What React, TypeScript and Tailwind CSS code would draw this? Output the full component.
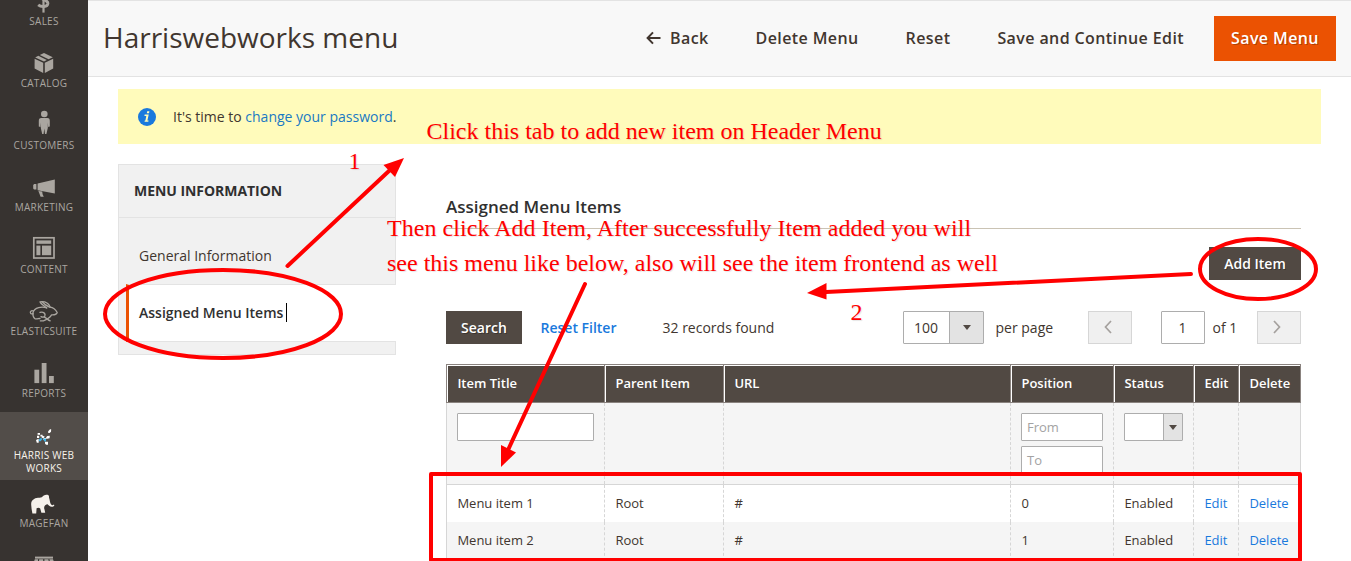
import React from "react";

const icons: Record<string, React.ReactNode> = {
  sales: (
    <g fill="none" stroke="currentColor" strokeWidth="2.9">
      <path d="M15.8 4.6C15 3.4 8 2.4 7.4 5.8C7.200 9.600 16 9 15.900 13.400C15.600 17.400 9 17.200 6.200 14.800" />
      <path d="M11.500 0V22.600" strokeWidth="2.2" />
    </g>
  ),
  catalog: (
    <g fill="currentColor">
      <path d="M2.6 6.8L11.2 10.8V21L2.6 16.6Z" />
      <path d="M12.8 10.8L21.2 6.8V16.6L12.8 21Z" />
      <path d="M3.2 5.4L6.3 3.8L14.8 8.1L12 9.6Z" />
      <path d="M7.8 3L12 1L20.8 5.3L16.6 7.3Z" />
    </g>
  ),
  customers: (
    <g fill="currentColor">
      <circle cx="12.3" cy="0" r="3.3" />
      <path d="M9.3 4H15.3C17.2 4 17.8 5.3 17.8 7V12.4L16.2 13L15.8 8.5V14L14.4 20H13L12.3 14.5L11.6 20H10.2L8.8 14V8.5L8.4 13L6.8 12.4V7C6.8 5.3 7.4 4 9.3 4Z" />
    </g>
  ),
  marketing: (
    <g fill="currentColor">
      <path d="M2 8H4.4V13.6H2L1.2 12.4V9.2Z" />
      <path d="M5.6 7.4L22.8 3.4V17.4L5.6 14.2Z" />
      <path d="M6.4 15L10.2 15.6L10.6 18.2L11.8 20.8H8.6Z" />
    </g>
  ),
  content: (
    <g fill="currentColor">
      <rect x="1.8" y="-.2" width="20.2" height="20.2" fill="none" stroke="currentColor" strokeWidth="1.7" />
      <rect x="4.4" y="2.4" width="14.8" height="3.4" />
      <rect x="4.4" y="7.6" width="4" height="9.6" />
      <rect x="10" y="7.6" width="9.2" height="9.6" />
    </g>
  ),
  rabbit: (
    <g fill="none" stroke="currentColor" strokeWidth="1.3" strokeLinecap="round" strokeLinejoin="round">
      <path d="M14.6 7.8C12.5 6.200 9.400 4.200 8 1.800C13 1.2 16.5 3 18 6.8" />
      <path d="M10.4 2C12.600 4.600 14.800 6 17.600 7.200" />
      <path d="M18 7.2C21 7.6 23.6 9.6 25.2 12.6C24.2 14.6 22.2 15.2 19.6 14.9C18 17.5 15.5 19.4 11.4 20.9H8.4" />
      <path d="M14.8 8C10 6 2.4 7.2 1 12.6C.7 15.3 1.2 17.2 2.6 18.4C4.2 19.7 6.2 18.4 8 18.5" />
      <path d="M1.3 11C-.6 10-2.4 11.8-1.4 13.2C-1 14.2.3 14 1 13.6" />
      <path d="M8 12.4C11.2 11.2 14 13.6 12.8 16.2C11.9 17.6 10 17.3 9 16.6M12.4 17.2C15 18.5 16 20.2 18.2 20.9" />
    </g>
  ),
  reports: (
    <g fill="currentColor">
      <rect x="2.4" y="7.7" width="4.8" height="13.4" />
      <rect x="9.7" y="1" width="4.8" height="20.1" />
      <rect x="17" y="14" width="4.8" height="7.1" />
    </g>
  ),
  harris: (
    <g fill="#fff">
      <path d="M16 7.4L18 5.2L19.2 5.200L19 7.400L17.8 9L16 8.8Z" />
      <path d="M5.6 9H8V10.800H5.600Z" />
      <path d="M14 13.6L15.2 12L17.8 11.8L17.6 14.2L15 14.8Z" />
      <path d="M5 11.800H7.200V14H5ZM8.400 10.800H10.5V12.400H8.400ZM4 16L6.700 14.8V18.700H4.800ZM10.4 11.5L12.8 12.800L11.2 14.5L9.4 13.2ZM12 14H15L13 16.5L11 15.8ZM13 17.800H16V20.8H14L13 19.5Z" />
      <path d="M7 15.2L9.4 13.8L10.2 15.2L8.6 17.2H7Z" fill="#42b4e6" />
      <path d="M11.4 14.4H13.8L14.2 17.2L12.8 17.8L11.2 15.6Z" fill="#42b4e6" />
    </g>
  ),
  elephant: (
    <path
      fill="#f5f1eb"
      d="M-.8 13C-1.2 8.6 2 6.2 6 5.8C8.4 5.6 9.5 5.6 10.6 4.5C12 2.6 14.4 3 15.2 2.8C16.6 2.6 17.2 4 17 5.5C18 8 17.8 11 19.2 12.6C20.2 13.6 21.2 13 21.8 12.4L22.4 13.2C21.4 15.4 18.6 15.2 17.2 13.8C16.2 12.8 15.5 12.1 14.6 12.4C12.4 13 11.6 15.2 12.5 17.5L13.2 20.8H9.4L8.2 16.4C7.3 15.4 5.5 15.5 4.6 16.2L4.2 21.6H.4L-.4 17Z"
    />
  ),
  store: (
    <g fill="currentColor">
      <path d="M3 2.6H21V4.6H3Z" />
      <path d="M2.8 5.2H6.2L5.6 9H1.6ZM7.2 5.2H11.2V9H6.8ZM12.4 5.2H16.4L17 9H12.4ZM17.4 5.2H21L22.4 9H18.2Z" />
    </g>
  ),
};

const nav = [
  { icon: "sales", label: "Sales" },
  { icon: "catalog", label: "Catalog" },
  { icon: "customers", label: "Customers" },
  { icon: "marketing", label: "Marketing" },
  { icon: "content", label: "Content" },
  { icon: "rabbit", label: "Elasticsuite" },
  { icon: "reports", label: "Reports" },
  { icon: "harris", label: "Harris Web Works", active: true },
  { icon: "elephant", label: "Magefan" },
  { icon: "store", label: "" },
];

function Sidebar() {
  return (
    <nav className="-mt-[22px] flex w-[88px] shrink-0 flex-col bg-[#373330]">
      {nav.map((n) => (
        <a
          key={n.icon}
          className={`flex shrink-0 flex-col items-center px-2.5 pt-3 text-center ${
            n.active ? "h-[68px] bg-[#524d49] text-[#f7f3eb]" : "h-[62px] text-[#aaa6a0]"
          }`}
        >
          <svg viewBox="0 0 24 24" className="size-6 shrink-0 overflow-visible">
            {icons[n.icon]}
          </svg>
          <span className="mt-px text-[10px] leading-[13px] tracking-[0.25px] uppercase">{n.label}</span>
        </a>
      ))}
    </nav>
  );
}

function Header() {
  return (
    <header className="flex h-[77px] items-center border-y border-[#e3e3e3] bg-[#f8f8f8] pr-[15px] pl-[15px] text-[#41362f]">
      <h1 className="pb-1 text-[28px] leading-none">Harriswebworks menu</h1>
      <div className="ml-auto flex items-center text-[16px] leading-[22px] font-semibold tracking-[0.4px]">
        <a className="flex items-center gap-[9px] pb-0.5">
          <svg viewBox="0 0 15 14" className="h-[14px] w-[15px]" fill="none" stroke="currentColor" strokeWidth="2">
            <path d="M14.5 7H1.8M7 1.4L1.6 7L7 12.6" />
          </svg>
          Back
        </a>
        <a className="ml-[47px] pb-0.5">Delete Menu</a>
        <a className="ml-[47px] pb-0.5">Reset</a>
        <a className="ml-[47px] pb-0.5">Save and Continue Edit</a>
        <a className="ml-[30px] flex h-[45px] w-[122px] items-center justify-center bg-[#eb5202] pb-0.5 text-white [text-shadow:1px_1px_0_rgba(0,0,0,0.25)]">
          Save Menu
        </a>
      </div>
    </header>
  );
}

function Tabs() {
  return (
    <div className="h-[191px] w-[278px] shrink-0 border border-[#e3e3e3] bg-[#f1f1f1]">
      <div className="flex h-[53px] items-center border-b border-[#e3e3e3] pb-0.5 pl-[15px] text-[14px] font-bold tracking-[-0.05px] text-[#303030]">
        MENU INFORMATION
      </div>
      <div className="flex h-[66px] items-center pt-2 pl-5 text-[14px]">General Information</div>
      <div className="-mr-px ml-[7px] flex h-[58px] items-center border-y border-l-[3px] border-y-[#e3e3e3] border-l-[#eb5202] bg-white pb-0.5 pl-2.5 text-[14px] font-semibold text-[#303030]">
        Assigned Menu Items
        <span className="ml-[3px] h-[19px] w-px bg-black" />
      </div>
    </div>
  );
}

const Caret = () => <span className="border-x-4 border-t-[5px] border-x-transparent border-t-[#514943]" />;

function Pager({ d }: { d: string }) {
  return (
    <span className="flex h-[33px] w-11 items-center justify-center border border-[#d6d6d6] bg-[#f0f0f0] pr-1 pb-0.5 text-[#a5a19e]">
      <svg viewBox="0 0 8 14" className="h-[14px] w-2" fill="none" stroke="currentColor" strokeWidth="1.7">
        <path d={d} />
      </svg>
    </span>
  );
}

function Toolbar() {
  return (
    <div className="mt-[31px] flex h-[33px] items-center text-[14px]">
      <button className="h-[33px] w-[76px] bg-[#514943] font-semibold text-white [text-shadow:1px_1px_0_rgba(0,0,0,0.3)]">
        Search
      </button>
      <a className="ml-[18.5px] w-[76px] font-semibold whitespace-nowrap text-[#1979dd]">Reset Filter</a>
      <span className="ml-[46px]">32 records found</span>
      <div className="ml-auto flex items-center">
        <span className="flex h-[33px] w-[81px] rounded-[1px] border border-[#adadad] bg-white">
          <span className="flex-1 pl-2.5 leading-[32px]">100</span>
          <span className="flex w-[34px] items-center justify-center border-l border-[#adadad] bg-[#e3e3e3]">
            <Caret />
          </span>
        </span>
        <span className="ml-[11.5px] w-[58.5px] whitespace-nowrap">per page</span>
        <span className="ml-[34px] flex">
          <Pager d="M7 1L1.5 7L7 13" />
        </span>
        <span className="ml-[29px] h-[33px] w-11 rounded-[1px] border border-[#adadad] pr-px text-center leading-[32px]">1</span>
        <span className="ml-[7.5px] w-[25.5px] whitespace-nowrap">of 1</span>
        <span className="ml-[19px] flex">
          <Pager d="M1 1L6.5 7L1 13" />
        </span>
      </div>
    </div>
  );
}

const cols = "grid grid-cols-[158px_119px_287px_103px_80px_45px_62px] border-l";
const heads = ["Item Title", "Parent Item", "URL", "Position", "Status", "Edit", "Delete"];
const rows = [
  ["Menu item 1", "Root", "#", "0", "Enabled", "Edit", "Delete"],
  ["Menu item 2", "Root", "#", "1", "Enabled", "Edit", "Delete"],
];
const cell = "border-r border-dashed border-[#d6d6d6] last:border-solid";
const input = "block h-7 rounded-[1px] border border-[#adadad] bg-white";

function Grid() {
  return (
    <div className="mt-5 text-[13px]">
      <div className={`${cols} h-[39px] border-y border-[#8a837f]`}>
        {heads.map((h) => (
          <div key={h} className="flex border-r border-[#8a837f]">
            <div className="flex-1 border-t border-l border-white bg-[#514943] pl-[9.4px] leading-[35px] font-semibold text-white">
              {h}
            </div>
          </div>
        ))}
      </div>
      <div className={`${cols} h-[82px] border-b border-[#d6d6d6] bg-[#f5f5f5]`}>
        <div className={`${cell} pt-2.5 pl-2.5`}>
          <span className={`${input} w-[137px]`} />
        </div>
        <div className={cell} />
        <div className={cell} />
        <div className={`${cell} flex flex-col gap-[5px] pt-2.5 pl-2.5 text-[#a3a3a3]`}>
          <span className={`${input} w-[82px] pl-[5px] leading-[27px]`}>From</span>
          <span className={`${input} w-[82px] pl-[5px] leading-[27px]`}>To</span>
        </div>
        <div className={`${cell} pt-2.5 pl-2.5`}>
          <span className="flex h-7 w-[59px] rounded-[1px] border border-[#adadad] bg-white">
            <span className="ml-auto flex w-[19px] items-center justify-center border-l border-[#adadad] bg-[#e3e3e3]">
              <Caret />
            </span>
          </span>
        </div>
        <div className={cell} />
        <div className={cell} />
      </div>
      {rows.map((r, i) => (
        <div
          key={r[0]}
          className={`${cols} border-[#d6d6d6] leading-[37px] ${i ? "h-[39px] bg-[#f5f5f5]" : "h-[37px] bg-white"}`}
        >
          {r.map((t, j) => (
            <div key={j} className={`${cell} pl-[10.4px] ${j > 4 ? "text-[#1979dd]" : ""}`}>
              {t}
            </div>
          ))}
        </div>
      ))}
    </div>
  );
}

const note =
  "absolute font-['Liberation_Serif',serif] text-[24px] leading-[35px] whitespace-nowrap text-[#ff0000] [text-shadow:1px_1px_1px_rgba(0,0,0,0.1)]";

function Annotations() {
  return (
    <div className="pointer-events-none absolute inset-0">
      <svg
        viewBox="0 0 1351 561"
        className="absolute inset-0 h-[561px] w-[1351px]"
        fill="none"
        stroke="#ff0000"
        strokeWidth="4"
      >
        <ellipse cx="223" cy="314" rx="118" ry="44" />
        <ellipse cx="1258" cy="269" rx="58" ry="30" />
        <rect x="431" y="474" width="869" height="86" strokeLinejoin="round" />
        <path d="M287.5 266L390 170M585 284L508.5 449M1191 274L826 292" strokeLinecap="round" />
        <g fill="#ff0000" stroke="none">
          <path d="M404 158L383.5 165L395 177Z" />
          <path d="M501 467L501 445L516 452.5Z" />
          <path d="M807 293L826.5 283V299.5Z" />
        </g>
      </svg>
      <span className={`${note} top-[114px] left-[426.500px]`}>Click this tab to add new item on Header Menu</span>
      <span className={`${note} top-[144px] left-[348.500px]`}>1</span>
      <span className={`${note} top-[211px] left-[387px]`}>
        <span className="tracking-[0.05px]">Then click Add Item, After successfully Item added you will</span>
        <br />
        see this menu like below, also will see the item frontend as well
      </span>
      <span className={`${note} top-[295px] left-[850.500px]`}>2</span>
    </div>
  );
}

export default function App() {
  return (
    <div className="relative flex h-[561px] w-[1351px] overflow-hidden bg-white font-['Open_Sans',sans-serif] text-[#41362f]">
      <Sidebar />
      <div className="flex min-w-0 flex-1 flex-col">
        <Header />
        <main className="flex flex-col pt-3 pl-[30px]">
          <div className="flex h-[55px] w-[1203px] items-center bg-[#fffbbb] pl-[19.5px] text-[14px]">
            <svg viewBox="0 0 18 18" className="mr-[17.5px] size-[18px]">
              <circle cx="9" cy="9" r="9" fill="#1979dd" />
              <path
                d="M9.2 3.2H11.4L11 5.2H8.8ZM6.7 6.6H10.7L9.4 12.4H10.6L10.3 13.8H6.5L6.8 12.6H7.4L8.3 8H6.4Z"
                fill="#fffbbb"
              />
            </svg>
            <span>
              It's time to <a className="text-[#1979c3]">change your password</a>.
            </span>
          </div>
          <div className="flex pt-5">
            <Tabs />
            <section className="ml-[50px] w-[855px] pt-[32px]">
              <h2 className="h-[33px] border-b border-[#cac3b4] text-[17px] leading-[21px] font-semibold text-[#303030]">
                Assigned Menu Items
              </h2>
              <div className="mt-[18px] flex justify-end">
                <button className="h-[33px] w-[92px] bg-[#514943] text-[14px] font-semibold text-white [text-shadow:1px_1px_0_rgba(0,0,0,0.3)]">
                  Add Item
                </button>
              </div>
              <Toolbar />
              <Grid />
            </section>
          </div>
        </main>
      </div>
      <Annotations />
    </div>
  );
}
